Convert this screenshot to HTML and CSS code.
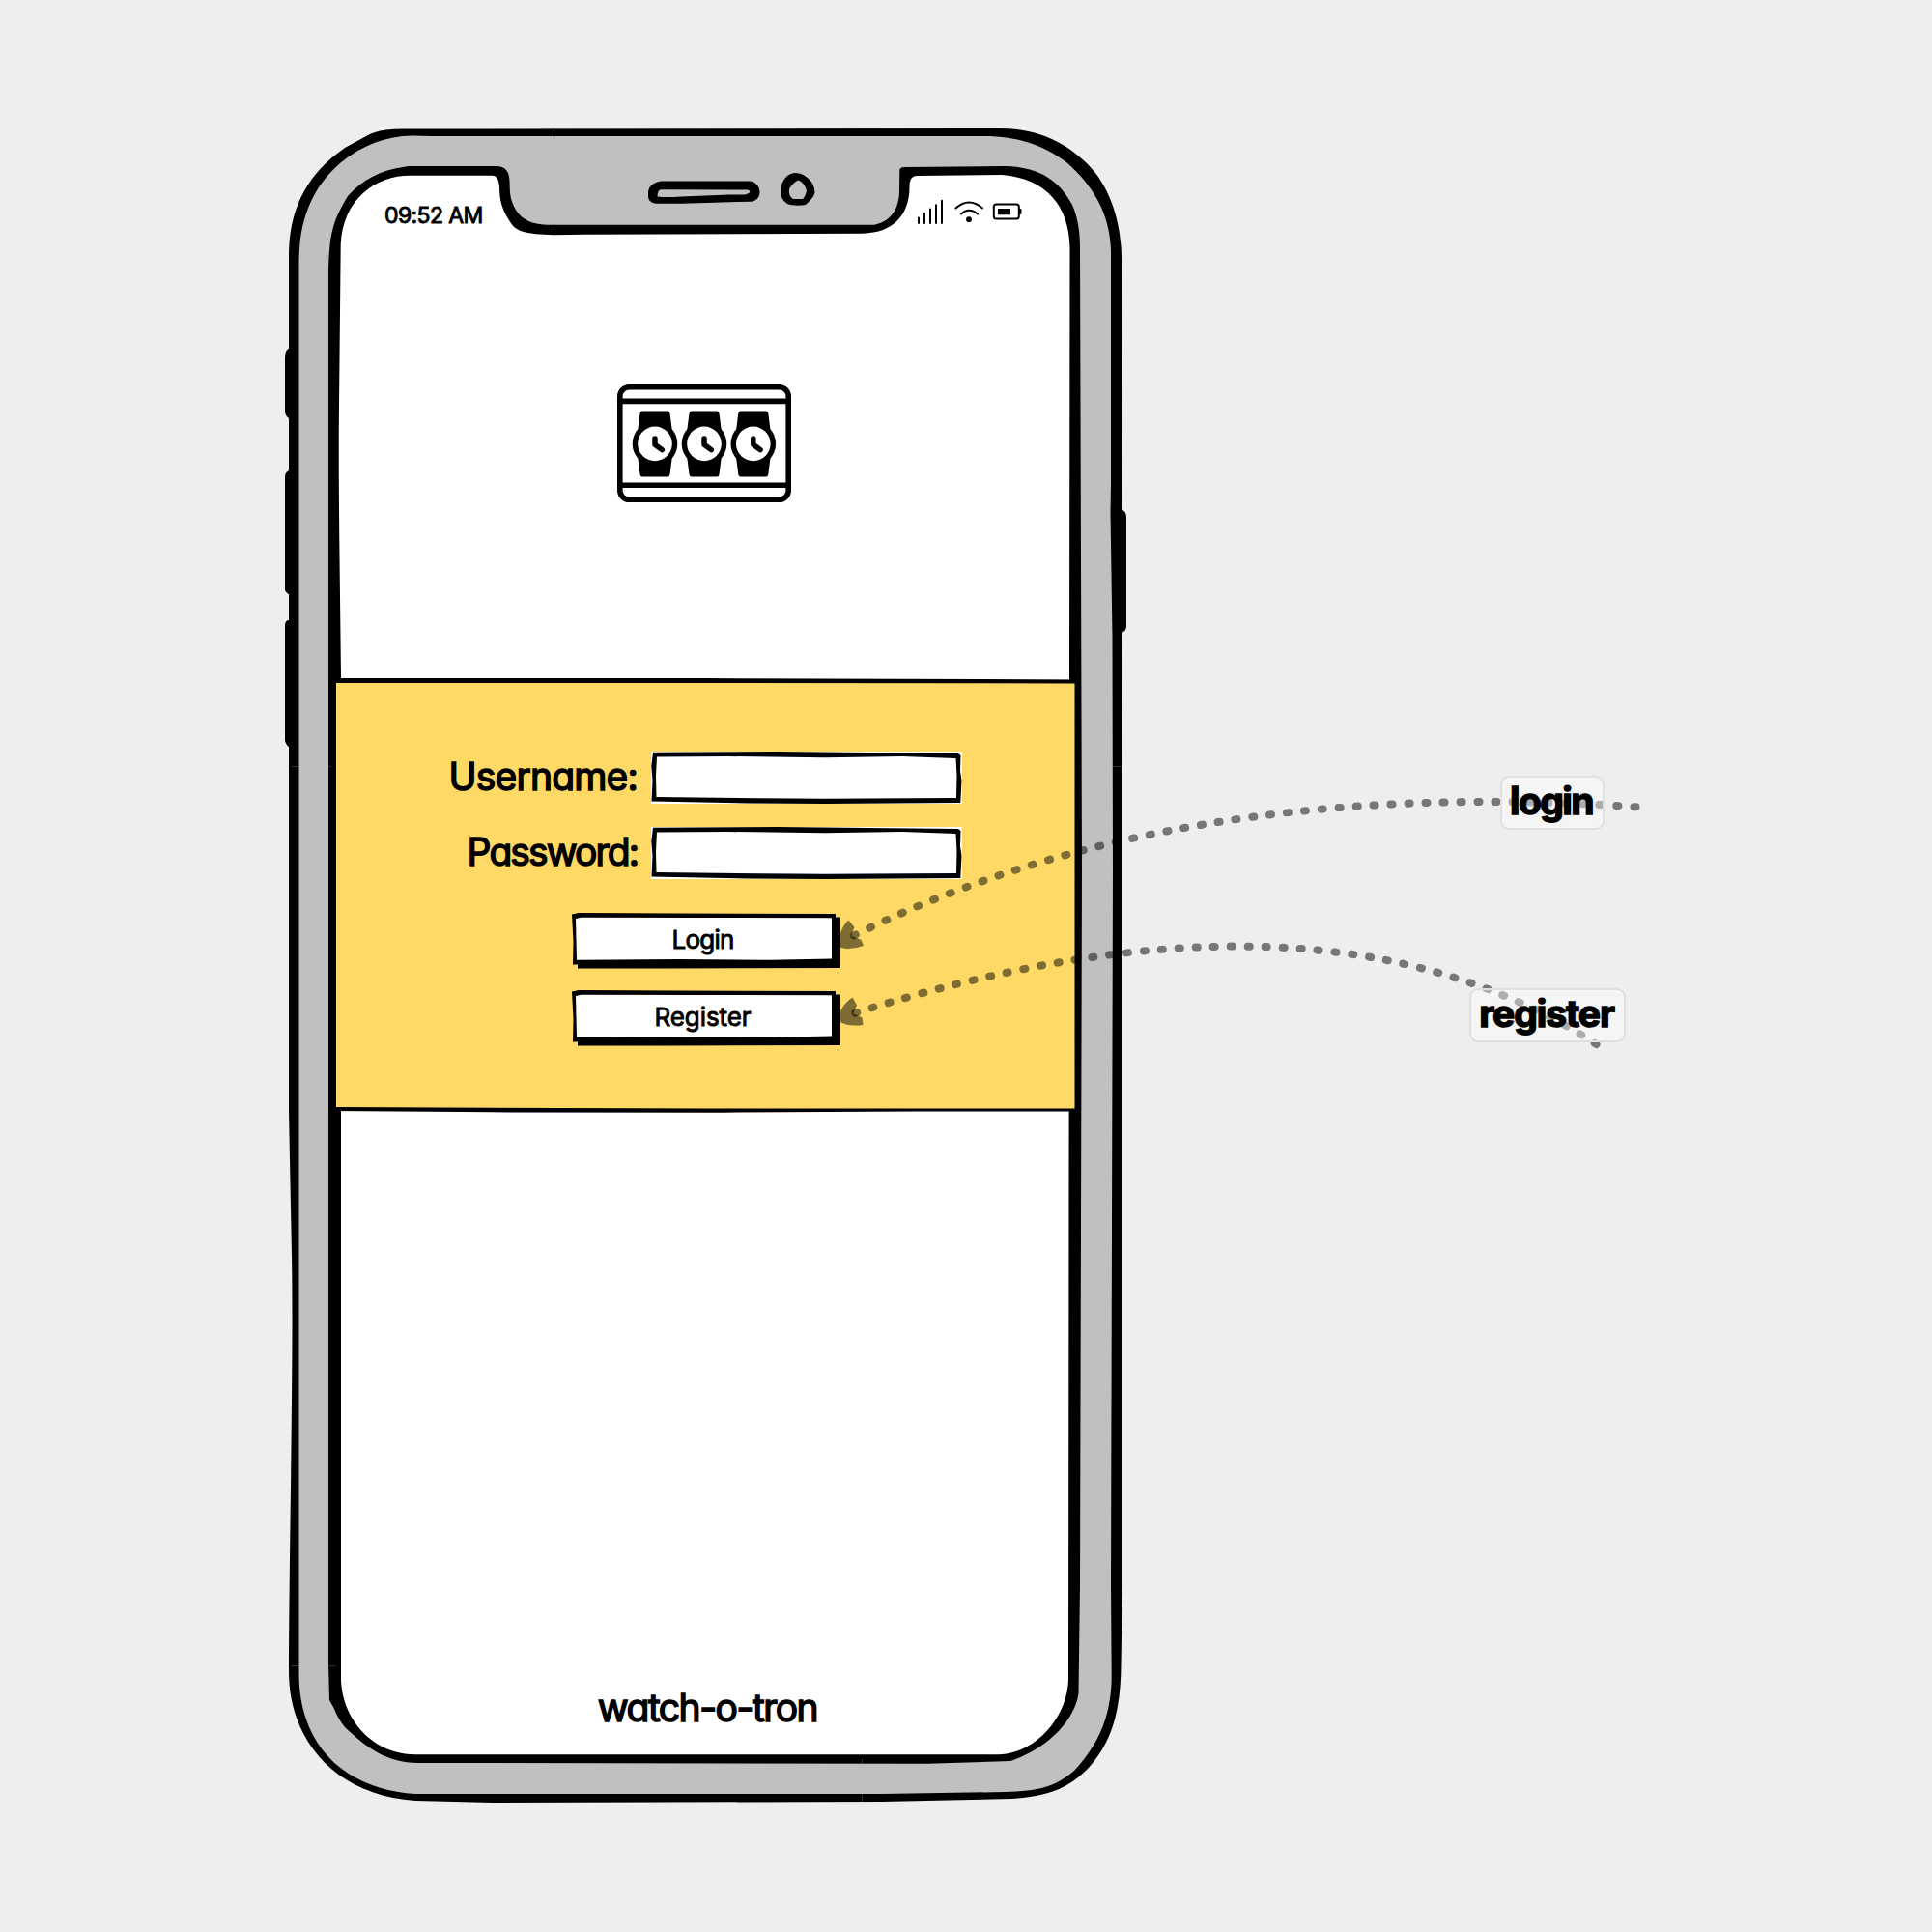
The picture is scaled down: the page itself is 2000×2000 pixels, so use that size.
FILE: index.html
```html
<!DOCTYPE html>
<html lang="en">
<head>
<meta charset="utf-8">
<title>watch-o-tron</title>
<link rel="stylesheet" href="styles.css">
</head>
<body>
<main class="canvas">
  <svg class="layer" viewBox="0 0 2000 2000" aria-hidden="true">
    <path d="M306 360H301Q295 361 295 370V426Q295 431 301 434H306ZM306 487H299Q295 489 295 494V611Q297 615 301 616H306ZM306 642H298Q295 643 295 648V767Q297 773 301 774H306ZM1156 527H1160Q1166 529 1166 535V649Q1165 655 1159 655H1156Z"/>
    <path d="M299 262C300 215 318 180 357 153L380 140.500C391 135 400 133.500 423 133.500L1036 133C1077 133 1106 150 1126 170C1150 194 1161 232 1161 268L1162 800V1640L1160.300 1733C1159 1768 1153 1801 1127 1830C1106 1851 1088 1859 1047 1862L913 1865L513 1866L430 1864C345 1858 299 1800 299 1730C299.500 1600 304 1400 302 1300L299 1150Z"/>
    <path class="body-fill" d="M309.500 270C310 220 328 190 352 169C375 150 400 141 427 140.500L447 141H1019C1053 141 1080 150 1104 168C1134 194 1150 225 1150 262V500L1149.500 530L1151.500 660L1152 900L1150 1640L1150.700 1737C1150 1780 1135 1808 1112 1833C1092 1850 1075 1854 1040 1855L913 1857H430C365 1853 310 1815 309.500 1733Z"/>
    <path d="M340 280C341 240 345 228 360 203C375 186 395 176 417 173L423 172H513C524 172 527 178 527.500 187C528 200 527 208 537 221.500C545 230 555 232.500 567 232.700H905C925 229 931 212 931 198L931.300 177Q931 173 936 173L1040 172C1080 173 1098 190 1110 212C1117 228 1118 245 1118 257L1120 900L1118 1640L1116.500 1753C1113 1780 1085 1810 1046 1823L960 1825.700L433 1825C400 1825 378 1808 357 1788Q349 1778 346 1769L341 1760L340 1723Z"/>
    <path class="screen-fill" d="M353 700C352 600 350 500 351 420L352.700 253C355 205 390 181 426 181.700H510Q516 182 517 193C517 208 520 217 527 228C534 241 545 242 573 243.300L606 242.700L893 241.700C925 241 941 222 941.500 195Q941 181 950 182L1037 181C1085 185 1107 215 1107.500 257L1107 700L1106 1740C1104 1780 1070 1816 1033 1816.300H430C385 1816 355 1780 353 1740Z"/>
    <path fill-rule="evenodd" d="M684 187.500H775C790 188 790 208.500 777 208.700L706 210.700H679Q671 210 671 203V200Q671 190 684 187.500ZM684 196.300Q680.600 197 680.600 203.500Q690 204.500 705 203.500L755 201.500H771Q780 199 774 196.500Z"/>
    <path fill-rule="evenodd" d="M822 179Q829 179 833 182Q843 188 843.500 199Q843 204 834 212Q827 213.500 818 212Q810 210 808 200Q808 192 811 187Q815 180 822 179ZM826 186.500Q832 188 835 197Q834 203 831 206H821Q816 203 817 196Q819 191 826 186.500Z"/>
    <path class="hair" d="M573.500 133V141M573.500 233V238M892.500 1821V1825M892.500 1858V1865M302 793.500H309M340 793.500H343M302 1724.500H309M340 1724.500H348M1118 793.500H1120M1152 793.500H1160"/>
  </svg>

  <section class="screen">
    <header class="status">
      <span class="time">09:52 AM</span>
      <svg class="status-icons" viewBox="0 0 110 28" aria-hidden="true">
        <path class="line" d="M3 20.500V26M9 16V26M15 11.500V26M21 7.200V26M27 2.800V26"/>
        <path class="line" d="M41.500 10.500Q55 -1.500 69 10.500M47 16.500Q55 9 64 16.500"/>
        <circle cx="55" cy="22.200" r="2.900"/>
        <rect class="line" x="80.800" y="6.500" width="26" height="15" rx="2.500"/>
        <path d="M85 11H98V17.300H85ZM107 10.500L109.500 11.500V16.500L107 17.500Z"/>
      </svg>
    </header>

    <div class="brand">
      <svg class="logo" viewBox="639 398 180 122" role="img" aria-label="Three watches in a display case">
        <g class="case">
          <rect x="641.800" y="400.800" width="174.400" height="116.400" rx="9.500"/>
          <path d="M642 415.400H816M642 502.300H816"/>
        </g>
        <defs>
          <g id="watch">
            <path d="M-13 -34H13Q15.300 -34 15.500 -31.500L17.500 -16V16L15.500 31.500Q15.300 34 13 34H-13Q-15.300 34 -15.500 31.500L-17.500 16V-16L-15.500 -31.500Q-15.300 -34 -13 -34Z"/>
            <circle r="23.300"/>
            <circle class="screen-fill" r="17.800"/>
            <path class="hands" d="M0 -5.500V.8L7.300 6.200"/>
          </g>
        </defs>
        <use href="#watch" x="678" y="459.400"/>
        <use href="#watch" x="729" y="459.400"/>
        <use href="#watch" x="779.800" y="459.400"/>
      </svg>
    </div>

    <form class="panel">
      <svg class="panel-edge" viewBox="0 0 766 449" aria-hidden="true">
        <path d="M-4 0L380 0L770 1.500V5.500L400 5H0V444L380 445.500H770V448.500L600 448.500L400 449.700L180 449.500L-4 448Z"/>
        <path d="M764.500 4H770V448H764.500Z"/>
      </svg>
      <div class="field">
        <label class="user-text" for="user">Username:</label>
        <div class="entry">
          <svg class="sketch" viewBox="0 0 322 54" aria-hidden="true"><path fill-rule="evenodd" d="M2 .8L130 0L318 2L320.500 4L320 20L321.500 30L320.300 53L180 54L100 53.500L.5 51.500L1.500 30L.3 15ZM6 5.500L80 5L180 6.300L260 5L315.500 7L316.500 25L316 48L180 48.700L110 48.200L5.500 47L5 25Z"/></svg>
          <input id="user" type="text" autocomplete="off">
        </div>
      </div>
      <div class="field">
        <label class="pass-text" for="pass">Password:</label>
        <div class="entry">
          <svg class="sketch" viewBox="0 0 322 54" aria-hidden="true"><path fill-rule="evenodd" d="M2 .8L130 0L318 2L320.500 4L320 20L321.500 30L320.300 53L180 54L100 53.500L.5 51.500L1.500 30L.3 15ZM6 5.500L80 5L180 6.300L260 5L315.500 7L316.500 25L316 48L180 48.700L110 48.200L5.500 47L5 25Z"/></svg>
          <input id="pass" type="password" autocomplete="off">
        </div>
      </div>
      <div class="actions">
        <button class="btn" type="button">
          <svg class="sketch" viewBox="0 0 278 60" aria-hidden="true"><path d="M0 1.500L7 0L110 .5L273 1V4.500H278V57L100 57.500H6V53.500H1L1.500 30Z"/><path class="screen-fill" d="M4 6L10 4.800L120 5L269 5.200V47.500L205 48.800L110 48L5 48.800Z"/></svg>
          <span class="login-text">Login</span>
        </button>
        <button class="btn" type="button">
          <svg class="sketch" viewBox="0 0 278 60" aria-hidden="true"><path d="M0 1.500L7 0L110 .5L273 1V4.500H278V57L100 57.500H6V53.500H1L1.500 30Z"/><path class="screen-fill" d="M4 6L10 4.800L120 5L269 5.200V47.500L205 48.800L110 48L5 48.800Z"/></svg>
          <span class="register-text">Register</span>
        </button>
      </div>
    </form>

    <footer class="foot"><span>watch-o-tron</span></footer>
  </section>

  <svg class="layer links" viewBox="0 0 2000 2000" aria-hidden="true">
    <path class="dots" d="M1693.500 835.300Q1207.500 802 870 975.500"/>
    <path class="dots" d="M1652.500 1081Q1363.700 893 870 1053.500"/>
    <path class="head" d="M870 966Q873 957 878.500 952.500L884.500 960L881 968.500L891.500 973L894 979Q880 984 870 980.700Z"/>
    <path class="head" d="M870 1046.500Q875 1037 882.600 1032.500L887 1040.500L883.500 1049L892.500 1053.500L893.500 1061Q878 1063 870 1058Z"/>
  </svg>
  <div class="tag tag-login"><span>login</span></div>
  <div class="tag tag-register"><span>register</span></div>
</main>
</body>
</html>
```

FILE: styles.css
```css
* { box-sizing: border-box; }

body {
  margin: 0;
  background: #eee;
  color: #000;
  font-family: Inter, "Liberation Sans", sans-serif;
  font-feature-settings: "cv11" 1;
}

.canvas {
  position: relative;
  width: 2000px;
  height: 2000px;
  overflow: hidden;
}

.canvas span,
.canvas label {
  display: inline-block;
  white-space: nowrap;
  line-height: 1;
  -webkit-text-stroke: 1.5px #000;
  stroke-linejoin: round;
  paint-order: stroke fill;
}

.layer {
  position: absolute;
  inset: 0;
  width: 2000px;
  height: 2000px;
}

.links { pointer-events: none; }
.body-fill { fill: #c0c0c0; }
.screen-fill { fill: #fff; }
.hair { fill: none; stroke: #303030; stroke-width: 1; }

.screen {
  position: absolute;
  left: 348px;
  top: 182px;
  width: 766px;
  height: 1634px;
  display: grid;
  grid-template-rows: 62px 460px 445px 1fr;
}

.status {
  display: flex;
  justify-content: space-between;
  align-items: flex-start;
  padding: 23px 56px 0 50px;
}

.canvas .time {
  font-size: 23px;
  letter-spacing: -0.6px;
  padding-top: 7px;
  -webkit-text-stroke-width: 0.9px;
}
.status-icons { width: 110px; height: 28px; }
.line { fill: none; stroke: #000; stroke-width: 2; stroke-linecap: round; }

.brand {
  display: flex;
  align-items: center;
  justify-content: center;
  padding: 0 4px 30px 0;
}

.logo { width: 180px; height: 122px; }
.case { fill: none; stroke: #000; stroke-width: 5.6; }
.hands {
  fill: none;
  stroke: #000;
  stroke-width: 5.5;
  stroke-linecap: round;
  stroke-linejoin: round;
}

.panel {
  position: relative;
  display: flex;
  flex-direction: column;
  gap: 24px;
  padding-top: 74px;
  background: #ffd966;
}

.panel-edge {
  position: absolute;
  left: 0;
  top: -2px;
  width: 766px;
  height: 449px;
  overflow: visible;
}

.field {
  display: grid;
  grid-template-columns: 312px 322px;
  column-gap: 14px;
  align-items: center;
  height: 54px;
}

.field label {
  justify-self: end;
  padding-bottom: 3px;
  font-size: 39px;
}

.user-text { letter-spacing: -0.8px; }
.pass-text { letter-spacing: -1.9px; }

.entry {
  position: relative;
  width: 322px;
  height: 54px;
  background: #fff;
}

.sketch {
  position: absolute;
  inset: 0;
  width: 100%;
  height: 100%;
}

.entry input {
  position: relative;
  width: 100%;
  height: 100%;
  padding: 0 12px;
  border: 0;
  outline: 0;
  background: transparent;
  font: 30px Inter, sans-serif;
}

.actions {
  display: flex;
  flex-direction: column;
  gap: 20px;
  padding: 11px 0 0 244px;
}

.btn {
  position: relative;
  width: 278px;
  height: 60px;
  padding: 0 7px 6px 0;
  border: 0;
  background: none;
  color: #000;
  font: 26px Inter, sans-serif;
  font-feature-settings: "cv11" 1;
}

.canvas .btn span { position: relative; -webkit-text-stroke-width: 0.9px; }
.login-text { letter-spacing: -0.8px; }
.register-text { letter-spacing: -0.1px; }

.foot {
  display: flex;
  justify-content: center;
  align-items: flex-end;
  padding: 0 0 29px 3px;
}

.foot span { font-size: 39px; letter-spacing: -1.5px; }

.dots {
  fill: none;
  stroke: #000;
  stroke-opacity: 0.5;
  stroke-width: 8;
  stroke-linecap: round;
  stroke-dasharray: 2 16;
}

.head { fill-opacity: 0.5; }

.tag {
  position: absolute;
  display: flex;
  align-items: center;
  justify-content: center;
  height: 56px;
  padding: 0 2px 5px 0;
  border: 2px solid #e0e0e0;
  border-radius: 9px;
  background: rgba(255, 255, 255, 0.4);
}

.tag span { font-size: 39px; font-weight: 700; letter-spacing: -1.6px; }
.tag-login { left: 1553px; top: 803px; width: 108px; }
.tag-register { left: 1521px; top: 1023px; width: 162px; }
.tag-register span { letter-spacing: -1.1px; }
```
